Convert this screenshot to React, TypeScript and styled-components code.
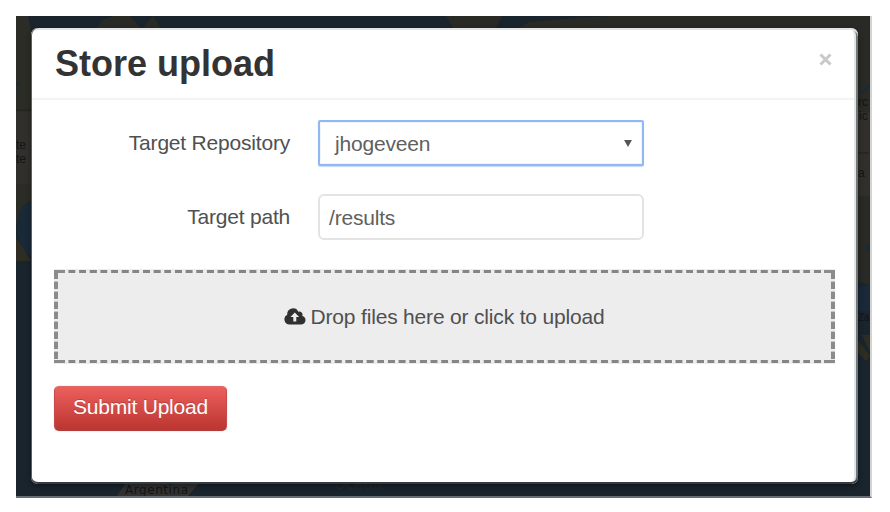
import React from "react";
import styled, { createGlobalStyle } from "styled-components";

const GlobalStyle = createGlobalStyle`
  *, *::before, *::after { box-sizing: border-box; }
  body {
    margin: 0;
    background: #fff;
    font-family: "Liberation Sans", Arial, sans-serif;
    overflow: hidden;
  }
`;

const Stage = styled.main`
  position: relative;
  width: 856px;
  height: 482px;
  margin: 16px 0 0 16px;
  padding: 12px 14px 13px 15px;
  background: #19242d;
  border-right: 2px solid #d4d3d0;
  border-bottom: 2px solid #666d78;
`;

const MapLayer = styled.svg`
  position: absolute;
  inset: 0;
`;

const Modal = styled.section`
  position: relative;
  display: flex;
  flex-direction: column;
  width: 827px;
  height: 456px;
  border-radius: 7px;
  background: #fff;
  box-shadow: inset 1px 0 #5a5f61, inset 0 2px #e3e3e3, inset 0 -2px #343b43, inset -2px 0 #71777b, inset -4px 0 #e2e3e3, 0 2px 5px rgba(0, 0, 0, 0.4);
`;

const Header = styled.header`
  display: flex;
  justify-content: space-between;
  height: 72px;
  margin: 0 4px 0 1px;
  padding: 14px 21px 0 23px;
  border-bottom: 2px solid #f3f3f3;
`;

const Title = styled.h3`
  margin: 0;
  color: #333;
  font-size: 36px;
  line-height: 44px;
  letter-spacing: 0;
`;

const CloseButton = styled.button`
  display: flex;
  width: 16px;
  height: 16px;
  margin-top: 9px;
  padding: 0;
  border: 0;
  background: none;
  align-items: center;
  justify-content: center;
`;

const Body = styled.form`
  display: flex;
  flex-direction: column;
  align-items: flex-start;
  padding: 20px 20px 0 23px;
`;

const FieldRow = styled.div`
  display: grid;
  grid-template-columns: 236px 326px;
  column-gap: 28px;
  height: 46px;
  margin-bottom: 28px;
`;

const Label = styled.label`
  color: #505050;
  font-size: 21px;
  line-height: 45px;
  letter-spacing: -0.2px;
  text-align: right;
  white-space: nowrap;
`;

const Field = styled.div<{ $focused?: boolean }>`
  display: flex;
  align-items: center;
  justify-content: space-between;
  height: 46px;
  padding: ${(p) => (p.$focused ? "1px 10px 0 15px" : "1px 9px 0")};
  border: 2px solid ${(p) => (p.$focused ? "#91b8f4" : "#e3e3e3")};
  border-radius: ${(p) => (p.$focused ? "2px" : "6px")};
  background: #fff;
  box-shadow: ${(p) => (p.$focused ? "0 1px 1px #c4dafb, inset 0 0 0 1px #f0f5fd" : "none")};
  color: #606060;
  font-size: 21px;
  line-height: 24px;
  letter-spacing: -0.2px;
`;

const dash = (direction: string, colour: string, length: number, period: number) =>
  `repeating-linear-gradient(${direction}, transparent 0 ${period - length - 0.5}px, ${colour} ${period - length + 0.5}px ${period - 0.5}px, transparent ${period}px)`;

const DropZone = styled.div`
  display: flex;
  align-items: center;
  justify-content: center;
  gap: 5px;
  width: 781px;
  height: 95px;
  margin-top: 1px;
  padding-right: 1px;
  background:
    linear-gradient(#8b8b8b, #8b8b8b) 0 1px / 11px 3px no-repeat,
    linear-gradient(#8b8b8b, #8b8b8b) 100% 1px / 11px 3px no-repeat,
    linear-gradient(#8b8b8b, #8b8b8b) 0 91px / 11px 3px no-repeat,
    linear-gradient(#8b8b8b, #8b8b8b) 100% 91px / 11px 3px no-repeat,
    linear-gradient(#8b8b8b, #8b8b8b) 0 1px / 4px 9px no-repeat,
    linear-gradient(#8b8b8b, #8b8b8b) 100% 1px / 4px 9px no-repeat,
    ${dash("90deg", "#858585", 7.2, 10.65)} 10.5px 1px / 759px 3px no-repeat,
    ${dash("90deg", "#858585", 7.2, 10.65)} 10.5px 91px / 759px 3px no-repeat,
    ${dash("180deg", "#8b8b8b", 7.4, 10)} 0 10px / 4px 84px no-repeat,
    ${dash("180deg", "#8b8b8b", 7.4, 10)} 100% 10px / 4px 84px no-repeat,
    #ededed;
  color: #505050;
  font-size: 21px;
  line-height: 24px;
  letter-spacing: -0.18px;
`;

const SubmitButton = styled.button`
  width: 173px;
  height: 45px;
  margin-top: 22px;
  padding: 0 0 2px;
  border: 1px solid #c94a4a;
  border-top-color: #df6b69;
  border-bottom: 2px solid #b33b39;
  border-radius: 5px;
  background: linear-gradient(#ec5f5c, #bc3632);
  box-shadow: 0 0 1px #d77;
  color: #fff;
  font: 21px/24px "Liberation Sans", Arial, sans-serif;
  letter-spacing: -0.22px;
  text-shadow: 0 -1px 0 rgba(0, 0, 0, 0.2);
`;

const WorldMap = () => (
  <MapLayer width="854" height="480" viewBox="16 16 854 480" aria-hidden="true">
    <path fill="#2b2c26" d="M16 16h12l3 16v170q-14 10-15 27z" />
    <path fill="#292925" d="M97 28l5-8 12-4h16l10 11-2 5H96zM142 28l11-12 8 12zM446 16h56l-6 12h-43zM518 28l11-6 45-4 36-2h260v270l-14-6V28z" />
    <path fill="#302f2b" d="M16 112h15v72H16zM856 112h14v84h-14z" />
    <path fill="#1a2937" d="M31 201q-15 5-14 30 3 20 14 24zM858 288l12-4v27h-12zM866 245h4v6h-4z" />
    <path fill="#2d2d24" d="M16 238l6 8 9 15H16zM858 340l12 16-4 5-8-8zM862 335h8v17z" />
    <path fill="#303130" d="M126 483h73l-11 13h-58l-14 1z" />
    <path fill="none" stroke="#20211f" d="M16 110h16M857 153h12" />
    <path fill="none" stroke="#172b3c" strokeWidth="2" d="M861 93l9-7M16 86l4-3" />
    <g fill="#141514" fontFamily="Liberation Sans, sans-serif" fontSize="12">
      <text x="16" y="149">te</text>
      <text x="16" y="163">te</text>
      <text x="858" y="106">rc</text>
      <text x="859" y="120">ic</text>
      <text x="858" y="177">a</text>
      <text x="858" y="321" fontSize="10">Za</text>
      <text x="125" y="494" fontFamily="DejaVu Sans, sans-serif" fontSize="12" textLength="63">Argentina</text>
    </g>
    <text x="334" y="489" fill="#25292b" fontFamily="DejaVu Sans, sans-serif" fontSize="15">Ocean</text>
  </MapLayer>
);

const CloudUpload = () => (
  <svg width="22" height="17" viewBox="0 0 22 17" aria-hidden="true">
    <path fill="#303030" fillRule="evenodd" d="M5.5 16.5A5.2 5.2 0 0 1 3.2 6.7V6A5.8 5.8 0 0 1 14.3 3.7a3.2 3.2 0 0 1 4 4.2A4.4 4.4 0 0 1 17.5 16.5zM10.8 4.5L6.5 9h2.8v4.4h3V9h2.8z" />
  </svg>
);

export default function App() {
  return (
    <>
      <GlobalStyle />
      <Stage>
        <WorldMap />
        <Modal role="dialog" aria-labelledby="upload-title">
          <Header>
            <Title id="upload-title">Store upload</Title>
            <CloseButton type="button" aria-label="Close">
              <svg width="13" height="13" viewBox="0 0 13 13">
                <path d="M1.5 1.5l10 10M11.5 1.5l-10 10" stroke="#c9c9c9" strokeWidth="3" />
              </svg>
            </CloseButton>
          </Header>
          <Body onSubmit={(event) => event.preventDefault()}>
            <FieldRow>
              <Label>Target Repository</Label>
              <Field $focused>
                <span>jhogeveen</span>
                <svg width="8" height="7" viewBox="0 0 9 8" aria-hidden="true">
                  <path d="M0 0h9L4.5 8z" fill="#555" />
                </svg>
              </Field>
            </FieldRow>
            <FieldRow>
              <Label>Target path</Label>
              <Field>
                <span>/results</span>
              </Field>
            </FieldRow>
            <DropZone>
              <CloudUpload />
              <span>Drop files here or click to upload</span>
            </DropZone>
            <SubmitButton type="submit">Submit Upload</SubmitButton>
          </Body>
        </Modal>
      </Stage>
    </>
  );
}
